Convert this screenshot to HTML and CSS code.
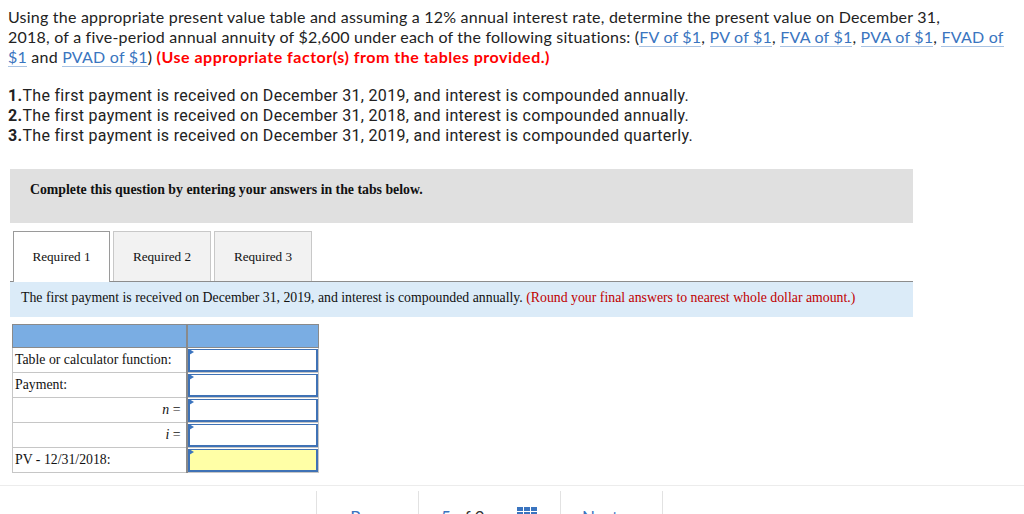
FILE: index.html
```html
<!DOCTYPE html>
<html>
<head>
<meta charset="utf-8">
<link rel="stylesheet" href="styles.css">
</head>
<body>
<p class="question">Using the appropriate present value table and assuming a 12% annual interest rate, determine the present value on December 31,<br>2018, of a five-period annual annuity of $2,600 under each of the following situations: (<a href="#">FV of $1</a>, <a href="#">PV of $1</a>, <a href="#">FVA of $1</a>, <a href="#">PVA of $1</a>, <a href="#">FVAD of $1</a> and <a href="#">PVAD of $1</a>) <strong class="warn">(Use appropriate factor(s) from the tables provided.)</strong></p>

<div class="items">
  <div><b>1.</b>The first payment is received on December 31, 2019, and interest is compounded annually.</div>
  <div><b>2.</b>The first payment is received on December 31, 2018, and interest is compounded annually.</div>
  <div><b>3.</b>The first payment is received on December 31, 2019, and interest is compounded quarterly.</div>
</div>

<div class="panel">
  <div class="instructions">Complete this question by entering your answers in the tabs below.</div>
  <div class="tabs">
    <div class="tab active">Required 1</div>
    <div class="tab">Required 2</div>
    <div class="tab">Required 3</div>
  </div>
  <div class="info">The first payment is received on December 31, 2019, and interest is compounded annually. <span class="round">(Round your final answers to nearest whole dollar amount.)</span></div>

  <table class="grid">
    <colgroup><col class="c1"><col class="c2"></colgroup>
    <tr class="head"><td class="lbl"></td><td class="val"></td></tr>
    <tr><td class="lbl">Table or calculator function:</td><td class="val"><div class="inp"></div></td></tr>
    <tr><td class="lbl">Payment:</td><td class="val"><div class="inp"></div></td></tr>
    <tr><td class="lbl right"><i>n</i> =</td><td class="val"><div class="inp"></div></td></tr>
    <tr><td class="lbl right"><i>i</i> =</td><td class="val"><div class="inp"></div></td></tr>
    <tr><td class="lbl">PV - 12/31/2018:</td><td class="val"><div class="inp yellow"></div></td></tr>
  </table>
</div>

<div class="nav">
  <div class="nav-item prev"><span class="arrow">&#8249;</span> Prev</div>
  <div class="nav-item page"><span class="num">5</span> of 9
    <svg class="gridicon" width="20" height="14" viewBox="0 0 20 14"><g fill="#3a74bf"><rect x="0" y="0" width="6" height="4"/><rect x="7" y="0" width="6" height="4"/><rect x="14" y="0" width="6" height="4"/><rect x="0" y="5" width="6" height="4"/><rect x="7" y="5" width="6" height="4"/><rect x="14" y="5" width="6" height="4"/><rect x="0" y="10" width="6" height="4"/><rect x="7" y="10" width="6" height="4"/><rect x="14" y="10" width="6" height="4"/></g></svg>
  </div>
  <div class="nav-item next">Next <span class="arrow">&#8250;</span></div>
</div>
</body>
</html>
```

FILE: styles.css
```css
html, body { margin: 0; padding: 0; background: #fff; }
body { padding: 7px 8px 0 8px; color: #222; overflow: hidden; height: 514px; box-sizing: border-box; }

.question {
  margin: 0;
  font-family: Lato, "Open Sans", sans-serif;
  font-size: 16px;
  letter-spacing: 0.22px;
  line-height: 20px;
  color: #222;
  width: 1010px;
}
.question a { color: #3a75bf; text-decoration: none; border-bottom: 1px solid #a9c3e3; }
.warn { color: #f00; font-weight: bold; letter-spacing: 0.5px; }

.items {
  margin-top: 19px;
  font-family: Roboto, sans-serif;
  font-size: 16px;
  letter-spacing: 0.3px;
  line-height: 20px;
  color: #222;
}
.items b { font-weight: bold; }

.panel { margin: 23px 0 0 2px; width: 903px; font-family: "Liberation Serif", serif; color: #111; }

.instructions {
  background: #e0e0e0;
  height: 54px;
  box-sizing: border-box;
  padding: 13px 0 0 20px;
  font-weight: bold;
  font-size: 13.8px;
}

.tabs {
  margin-top: 8px;
  display: flex;
  gap: 3px;
  padding-left: 3px;
  height: 50px;
  border-bottom: 1px solid #8c8c8c;
}
.tab {
  width: 98px;
  height: 50px;
  box-sizing: border-box;
  border: 1px solid #c8c8c8;
  border-bottom: none;
  background: #f2f2f2;
  font-size: 13.2px;
  display: flex;
  align-items: center;
  justify-content: center;
}
.tab.active {
  width: 97px;
  height: 51px;
  background: #fff;
  border-color: #9a9a9a;
}

.info {
  background: #dbebf8;
  height: 35px;
  box-sizing: border-box;
  padding: 8px 0 0 11px;
  font-size: 13.8px;
}
.round { color: #c00000; }

.grid {
  margin: 7px 0 0 2px;
  border-collapse: collapse;
  border: 1px solid #8a8a8a;
  font-size: 13.8px;
  table-layout: fixed;
  width: 306px;
}
.grid col.c1 { width: 174px; }
.grid col.c2 { width: 132px; }
.grid td { padding: 0; border: 1px solid #c6c6c6; height: 24px; white-space: nowrap; overflow: hidden; }
.grid td.lbl { padding-left: 2px; border-right: 2px solid #8a8a8a; }
.grid td.right { text-align: right; padding-right: 5px; }
.grid td.val { padding: 0; }
.grid tr.head td { background: #7aade3; height: 22px; border-color: #8a8a8a; }
.inp {
  position: relative;
  height: 23px;
  box-sizing: border-box;
  border: 2px solid #3f72b5;
  border-width: 1px 2px 2px 2px;
  background: #fff;
}
.inp::before {
  content: "";
  position: absolute;
  left: -1px; top: -1px;
  border-left: 5px solid #3a74bf;
  border-top: 3px solid transparent;
  border-bottom: 3px solid transparent;
}
.inp.yellow { background: #ffffa6; }

.nav {
  margin: 12px -8px 0 -8px;
  border-top: 1px solid #ececec;
  display: flex;
  padding-left: 316px;
  height: 40px;
  font-family: Lato, sans-serif;
  font-size: 17px;
  color: #3a74bf;
}
.nav-item {
  border-left: 1px solid #e2e2e2;
  margin-top: 5px;
  padding-top: 17px;
  box-sizing: border-box;
  line-height: 20px;
}
.nav-item.prev { width: 102px; padding-left: 24px; }
.nav-item.page { width: 142px; padding-left: 22px; color: #333; }
.nav-item.page .num { color: #3a74bf; }
.nav-item.next { width: 103px; padding-left: 21px; border-right: 1px solid #e2e2e2; }
.arrow { font-weight: bold; }
.gridicon { vertical-align: top; margin-left: 28px; margin-top: -1px; }
```
